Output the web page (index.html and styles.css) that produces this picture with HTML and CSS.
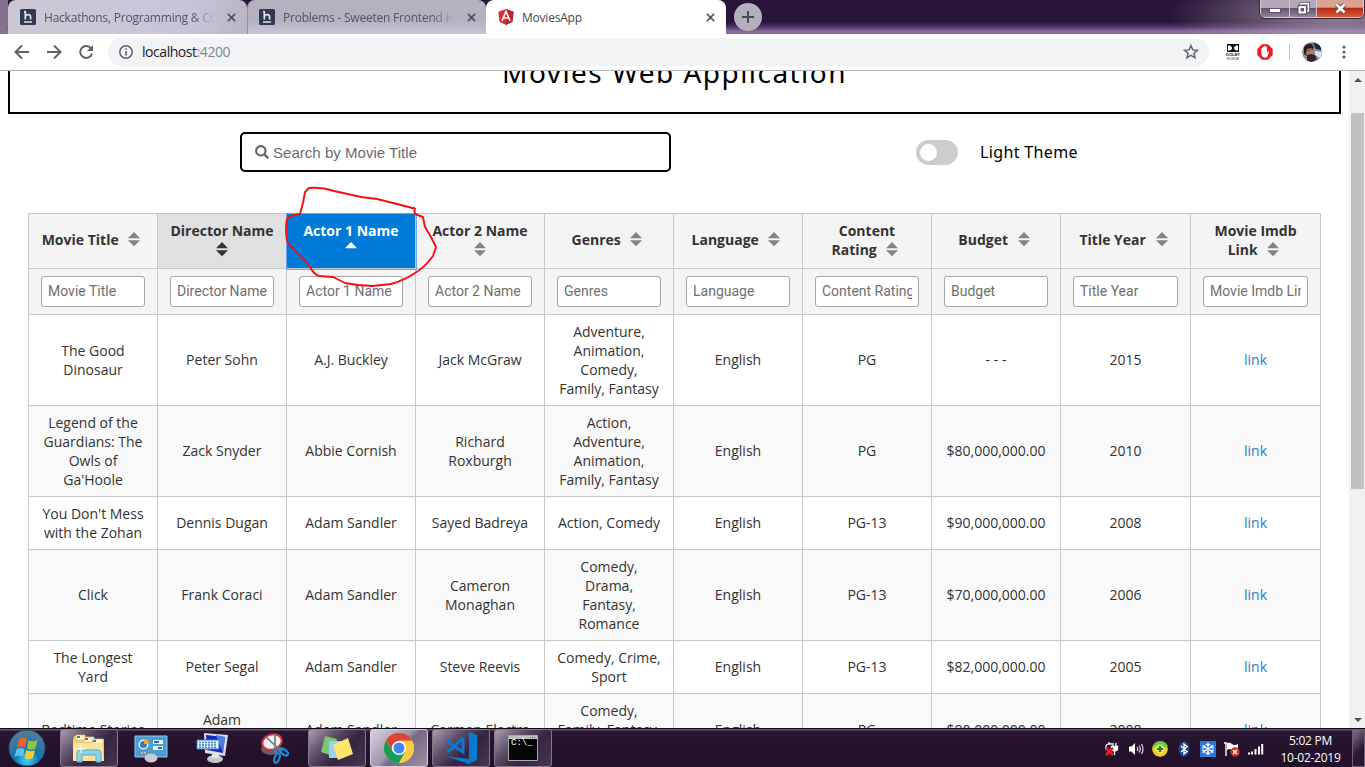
FILE: index.html
```html
<!DOCTYPE html>
<html lang="en">
<head>
<meta charset="utf-8">
<title>MoviesApp</title>
<link rel="stylesheet" href="styles.css">
</head>
<body>
<svg class="defs" aria-hidden="true">
  <symbol id="sort" viewBox="0 0 18 16"><path d="M3 7.2 9 1l6 6.200zM3 9.300h12L9 15.200z"/></symbol>
  <symbol id="x" viewBox="0 0 10 10"><path d="M1 1l8 8M9 1l-8 8" fill="none" stroke="currentColor" stroke-width="1.7"/></symbol>
  <symbol id="he" viewBox="0 0 16 16"><rect width="16" height="16" rx="1.500" fill="#323754"/><path d="M5.300 2v8.500M5.300 7.500q1-2 3.200-1.800Q10.600 6 10.600 8v2.500M4 2.700h1.300M4 13h8" fill="none" stroke="#e3e3ee" stroke-width="1.700"/></symbol>
</svg>

<header class="tabs">
  <div class="tab first"><svg class="fav"><use href="#he"/></svg><span class="tab-title fade">Hackathons, Programming &amp; Coding</span><svg class="close"><use href="#x"/></svg></div>
  <div class="tab second"><svg class="fav"><use href="#he"/></svg><span class="tab-title fade">Problems - Sweeten Frontend Hiring</span><svg class="close"><use href="#x"/></svg></div>
  <div class="tab active"><svg class="fav" viewBox="0 0 16 16"><path d="M8 0l7.600 2.700-1.100 10L8 16l-6.500-3.300L.400 2.700z" fill="#dd2c36"/><path d="M8 0l7.600 2.700-1.100 10L8 16z" fill="#b9262e"/><path d="M4 11.800 8 2.600l4 9.200M5.700 9h4.600" fill="none" stroke="#fff" stroke-width="1.600"/></svg><span class="tab-title">MoviesApp</span><svg class="close"><use href="#x"/></svg></div>
  <div class="newtab"><svg width="14" height="14" viewBox="0 0 14 14"><path d="M7 1v12M1 7h12" stroke="#4b4a55" stroke-width="2"/></svg></div>
  <div class="winbtns">
    <span class="wb min"><svg width="12" height="5"><rect x=".5" y=".5" width="11" height="4" fill="#fff" stroke="#555566"/></svg></span>
    <span class="wb max"><svg width="13" height="13"><path d="M4 3V1h8v8h-2" fill="none" stroke="#515164" stroke-width="2.600"/><path d="M4 3V1.500h7.500V9H10" fill="none" stroke="#fff" stroke-width="1.300"/><path d="M1 3.500h8.500v8.500H1z" fill="#fff" stroke="#515164"/><path d="M4 6.500h2.500V9H4z" fill="#77768a" stroke="#515164"/></svg></span>
    <span class="wb cls"><svg width="13" height="11"><path d="M2.500 1.500l8 8M10.500 1.500l-8 8" stroke="#5e4249" stroke-width="4.600"/><path d="M2.500 1.500l8 8M10.500 1.500l-8 8" stroke="#fff" stroke-width="2.700"/></svg></span>
  </div>
</header>

<nav class="toolbar">
  <svg class="nav" viewBox="0 0 16 16"><path d="M15 8H2M8 1.500 1.500 8 8 14.500"/></svg>
  <svg class="nav" viewBox="0 0 16 16"><path d="M1 8h13M8 1.500 14.500 8 8 14.500"/></svg>
  <svg class="nav" viewBox="0 0 16 16"><path d="M13 4.300A6 6 0 1 0 14 9.500"/><path d="M15 1v6H9z" class="solid"/></svg>
  <div class="omnibox">
    <svg width="16" height="16" viewBox="0 0 16 16"><circle cx="8" cy="8" r="6.200" fill="none" stroke="#5f6368" stroke-width="1.500"/><path d="M8 7v4.500M8 4.200v1.600" stroke="#5f6368" stroke-width="1.600"/></svg>
    <span class="url">localhost<span>:4200</span></span>
    <svg class="star" width="16" height="16" viewBox="0 0 16 16"><path d="M8 1.700l1.800 4.200 4.600.4-3.500 3 1.100 4.500L8 11.400l-4 2.400 1.100-4.500-3.500-3 4.600-.4z" fill="none" stroke="#5f6368" stroke-width="1.500"/></svg>
  </div>
  <div class="dolby"><svg width="12" height="8"><path d="M0 0h12v8H0z" fill="#111"/><path d="M1 1.500h1.500Q5 2 5 4T2.500 6.500H1zM11 1.500H9.500Q7 2 7 4t2.500 2.500H11z" fill="#fff"/></svg><b>DOLBY</b><i>VOICE</i></div>
  <svg class="adblock" width="16" height="16" viewBox="0 0 16 16"><path d="M5 .3h6L15.700 5v6L11 15.700H5L.300 11V5z" fill="#ec1c24"/><path d="M4.300 8V4.300q.8-.8 1.300 0V7V3q.8-.8 1.400 0v3.500V2.300q.8-.7 1.400 0v4.200V3q.9-.8 1.500 0v6l1.200-1.800q1.300-.3.900.8L10.300 13Q7.500 14.500 5.300 12.500 4.300 11 4.300 8z" fill="#fff"/></svg>
  <span class="sep"></span>
  <svg class="avatar" width="20" height="20" viewBox="0 0 20 20"><defs><clipPath id="ac"><circle cx="10" cy="10" r="10"/></clipPath></defs><g clip-path="url(#ac)"><path d="M0 0h20v20H0z" fill="#8d9099"/><path d="M2 5q3-4 8-3l2 4-3 3-4 5-3-2z" fill="#2c1e20"/><path d="M5 7l5-1 3 4-2 5-4 1-3-4z" fill="#b67c68"/><path d="M6 8l2 1M9 7l2 1" stroke="#3d2623"/><path d="M11 1l8 1v6l-5-1z" fill="#1c2741"/><path d="M13 9l7 1-2 6-5-3z" fill="#d8e7f2"/><path d="M5 13l4-1 4 1 2 4-5 3H5z" fill="#342328"/></g></svg>
  <svg class="dots" width="4" height="14"><circle cx="2" cy="2" r="1.600"/><circle cx="2" cy="7" r="1.600"/><circle cx="2" cy="12" r="1.600"/></svg>
</nav>

<main class="viewport">
  <div class="page">
    <h1 class="hero">Movies Web Application</h1>
    <div class="controls">
      <div class="search"><svg width="14" height="14" viewBox="0 0 14 14"><circle cx="5.800" cy="5.800" r="4.700" fill="none" stroke="#636363" stroke-width="2.100"/><path d="M9.200 9.200l4 4" stroke="#636363" stroke-width="2.500"/></svg><span>Search by Movie Title</span></div>
      <div class="toggle"><i></i></div><span class="theme">Light Theme</span>
    </div>
    <table class="movies">
      <colgroup><col span="8"><col class="wide" span="2"></colgroup>
      <thead>
        <tr class="head">
          <th>Movie Title <svg><use href="#sort"/></svg></th>
          <th class="stacked hover">Director Name<br><svg><use href="#sort"/></svg></th>
          <th class="stacked sorted">Actor 1 Name<br><svg viewBox="0 0 18 16"><path d="M3 7.200 9 1l6 6.200z"/></svg></th>
          <th class="stacked">Actor 2 Name<br><svg><use href="#sort"/></svg></th>
          <th>Genres <svg><use href="#sort"/></svg></th>
          <th>Language <svg><use href="#sort"/></svg></th>
          <th>Content<br>Rating <svg><use href="#sort"/></svg></th>
          <th>Budget <svg><use href="#sort"/></svg></th>
          <th>Title Year <svg><use href="#sort"/></svg></th>
          <th>Movie Imdb<br>Link <svg><use href="#sort"/></svg></th>
        </tr>
        <tr class="filters">
          <th><input placeholder="Movie Title"></th><th><input placeholder="Director Name"></th><th><input placeholder="Actor 1 Name"></th><th><input placeholder="Actor 2 Name"></th><th><input placeholder="Genres"></th><th><input placeholder="Language"></th><th><input placeholder="Content Rating"></th><th><input placeholder="Budget"></th><th><input placeholder="Title Year"></th><th><input placeholder="Movie Imdb Link"></th>
        </tr>
      </thead>
      <tbody>
        <tr><td>The Good<br>Dinosaur</td><td>Peter Sohn</td><td>A.J. Buckley</td><td>Jack McGraw</td><td>Adventure,<br>Animation,<br>Comedy,<br>Family, Fantasy</td><td>English</td><td>PG</td><td>- - -</td><td>2015</td><td><a>link</a></td></tr>
        <tr><td>Legend of the<br>Guardians: The<br>Owls of<br>Ga'Hoole</td><td>Zack Snyder</td><td>Abbie Cornish</td><td>Richard<br>Roxburgh</td><td>Action,<br>Adventure,<br>Animation,<br>Family, Fantasy</td><td>English</td><td>PG</td><td>$80,000,000.00</td><td>2010</td><td><a>link</a></td></tr>
        <tr><td>You Don't Mess<br>with the Zohan</td><td>Dennis Dugan</td><td>Adam Sandler</td><td>Sayed Badreya</td><td>Action, Comedy</td><td>English</td><td>PG-13</td><td>$90,000,000.00</td><td>2008</td><td><a>link</a></td></tr>
        <tr><td>Click</td><td>Frank Coraci</td><td>Adam Sandler</td><td>Cameron<br>Monaghan</td><td>Comedy,<br>Drama,<br>Fantasy,<br>Romance</td><td>English</td><td>PG-13</td><td>$70,000,000.00</td><td>2006</td><td><a>link</a></td></tr>
        <tr><td>The Longest<br>Yard</td><td>Peter Segal</td><td>Adam Sandler</td><td>Steve Reevis</td><td>Comedy, Crime,<br>Sport</td><td>English</td><td>PG-13</td><td>$82,000,000.00</td><td>2005</td><td><a>link</a></td></tr>
        <tr><td>Bedtime Stories</td><td>Adam<br>Shankman</td><td>Adam Sandler</td><td>Carmen Electra</td><td>Comedy,<br>Family, Fantasy,<br>Romance</td><td>English</td><td>PG</td><td>$80,000,000.00</td><td>2008</td><td><a>link</a></td></tr>
      </tbody>
    </table>
  </div>
  <div class="scrollbar"><svg width="8" height="4"><path d="M0 4l4-4 4 4z"/></svg><div class="thumb"></div><svg class="down" width="8" height="4"><path d="M0 0h8L4 4z"/></svg></div>
</main>

<svg class="ink" width="160" height="110" viewBox="280 180 160 110"><path d="M300 214 303 203 305 192 309 188Q322 187 334 191 348 194 361 197L377 199 397 204 416 209M414 207 415 214 423 217 425 227 431 237 436 247 433 256Q425 267 415 273 405 280 391 284L373 286Q359 286 345 283L333 277 319 276Q313 274 309 265 303 258 295 251L287 241Q285 229 287 219 291 215 300 214"/></svg>

<footer class="taskbar">
  <span class="app"><svg width="38" height="38" viewBox="0 0 38 38"><defs><radialGradient id="orb" cx=".5" cy=".85" r=".85"><stop offset="0" stop-color="#36d9ff"/><stop offset=".4" stop-color="#1273ae"/><stop offset="1" stop-color="#5c7e96"/></radialGradient></defs><circle cx="19" cy="19" r="18" fill="url(#orb)" stroke="#284d6a"/><path d="M11 10q4-2.500 8 0L17 18.500q-3.500-2-8 0z" fill="#f0612a"/><path d="M20.500 11q4 2.500 9 0l-2 8.500q-4 2.500-8.600 0z" fill="#8cc63f"/><path d="M8.600 20q4-2 8 0L15 28q-3.500-2.500-8.500 0z" fill="#63bdf0"/><path d="M18.300 21q4 2.500 8.600 0L25 29q-4 2.500-8.500 0z" fill="#fcca35"/></svg></span>
  <span class="app open"><svg width="34" height="32" viewBox="0 0 34 32"><path d="M2 4h10l2 3h18v22H1V8z" fill="#e9ce78"/><path d="M4 3h9v5H4zM12 5h10v5H12zM20 7h11v5H20z" fill="#fff9df" stroke="#d8b968" stroke-width=".7"/><path d="M5 4h3v2H5z" fill="#24a544"/><path d="M13 6h3v2h-3z" fill="#d43b29"/><path d="M21 8h3v2h-3z" fill="#2687cf"/><path d="M1 11h29l2 18H1z" fill="#f8e59b"/><path d="M5 30V21q0-3 3-3h18q3 0 3 3v9h-5v-7H10v7z" fill="#8dd0ec" stroke="#57a7ce"/><path d="M9 13v8M5 17h8" stroke="#fff"/></svg></span>
  <span class="app"><svg width="34" height="30" viewBox="0 0 34 30"><path d="M1 3h32v21H1z" fill="#4b9dd2" stroke="#8ccaf0"/><circle cx="9.500" cy="11.500" r="4.300" fill="#3479bb" stroke="#e2f5ff" stroke-width="1.500"/><path d="M10 11V6q5 0 5 5z" fill="#f9a62b"/><path d="M19 9h10M19 15h10" stroke="#e3f5fc" stroke-width="4"/><path d="M20 9h5M24 15h4" stroke="#2472b1" stroke-width="2"/><path d="M7 20h2M10 20h2" stroke="#ffb13a" stroke-width="2"/><ellipse cx="17" cy="25" rx="6.500" ry="4.500" fill="#c9cbce"/></svg></span>
  <span class="app"><svg width="34" height="34" viewBox="0 0 34 34"><path d="M8 2 32 4 29 25 9 22z" fill="#d9dde4"/><path d="M10 4 29 6 27 22 11 19z" fill="#1029be"/><path d="M20 4l9 2-2 16z" fill="#507ce0"/><path d="M1 9h22v9H1z" fill="#e9f3fc" stroke="#317ccd"/><path d="M3 11.500h18M3 14h18M3 16.500h18" stroke="#317ccd" stroke-width="1.500" stroke-dasharray="2 1"/><ellipse cx="19" cy="28" rx="8" ry="4" fill="#c5c7ce"/><path d="M16 22h7v5h-7z" fill="#e3e4e8"/></svg></span>
  <span class="app"><svg width="34" height="34" viewBox="0 0 34 34"><ellipse cx="13" cy="18" rx="10" ry="6" fill="#6a5868"/><ellipse cx="14" cy="11" rx="10" ry="7.500" fill="#f2eff1" stroke="#d3343c" stroke-width="2" transform="rotate(-18 14 11)"/><path d="M8 6l15 14M17 3l0 19" stroke="#737983" stroke-width="1.700"/><path d="M17 18l1 4M19 18l6 1" stroke="#238ad1" stroke-width="2"/><ellipse cx="26" cy="21" rx="4.500" ry="2.500" fill="none" stroke="#238ad1" stroke-width="2.200" transform="rotate(38 26 21)"/><ellipse cx="19" cy="27" rx="2.300" ry="5" fill="none" stroke="#238ad1" stroke-width="2.200" transform="rotate(20 19 27)"/></svg></span>
  <span class="app open"><svg width="34" height="30" viewBox="0 0 34 30"><path d="M5 3l12 3-4 17L1 19z" fill="#79c877"/><path d="M9 8h15v17H9z" fill="#9fd0fa"/><path d="M13 12 28 5l5 16-15 6z" fill="#ffe56b"/></svg></span>
  <span class="app open current"><svg width="32" height="32" viewBox="0 0 32 32"><circle cx="16" cy="16" r="15" fill="#f4c345"/><path d="M16 16 3 8.500A15 15 0 0 1 29 8.500H16z" fill="#db4437"/><path d="M16 16l-6 4L3 8.500A15 15 0 0 0 16 31l6.500-11.500z" fill="#169d58"/><path d="M29 8.500H16l6.500 11L16 31A15 15 0 0 0 29 8.500z" fill="#ffcd40"/><path d="M3 8.500A15 15 0 0 1 29 8.500H16a7 7 0 0 0-6.600 10z" fill="#db4437"/><circle cx="16" cy="16" r="7" fill="#fff"/><circle cx="16" cy="16" r="5.500" fill="#4285f4"/></svg></span>
  <span class="app open"><svg width="34" height="34" viewBox="0 0 34 34"><path d="M25 1l8 3v25l-8 4L1 25l24 3z" fill="#087bd0"/><path d="M19 7v14L4 11l2-1.500M19 7 5 20l-1.500-1" fill="none" stroke="#087bd0" stroke-width="3"/></svg></span>
  <span class="app open"><svg width="30" height="26" viewBox="0 0 30 26"><path d="M.5.500h29v25H.500z" fill="#050505" stroke="#aaa"/><path d="M1 1h28v3H1z" fill="#bfc1c6"/><path d="M22 2.500h6" stroke="#666" stroke-dasharray="1 1"/></svg><span class="prompt">C:\_</span></span>
  <div class="tray">
    <svg viewBox="0 0 16 16"><path d="M8 3q-6-1-6 3v3M5 1v3" fill="none" stroke="#fff" stroke-width="1.300"/><path d="M7.500 5.500h6v3q-3 3-6 0zM9 2v3M12 2v3M10.500 10v4" fill="#fff" stroke="#fff" stroke-width="1.300"/><path d="M2 7l7 7M9 7l-7 7" stroke="#f11922" stroke-width="2.500"/></svg>
    <svg viewBox="0 0 16 16"><path d="M1 5.500h2.500L7 2v12l-3.500-3.500H1z" fill="#fff"/><path d="M9 6q1.500 2 0 4M11 4.500q2.500 3.500 0 7M13.500 3q3 5 0 10" fill="none" stroke="#ddd" stroke-width="1.200"/></svg>
    <svg viewBox="0 0 16 16"><circle cx="8" cy="8" r="7.800" fill="#f1cc26"/><path d="M8 .2A7.800 7.800 0 0 0 .2 8q3-4 7.800-2t7.800-1A7.800 7.800 0 0 0 8 .2z" fill="#70c63d"/><circle cx="8" cy="8" r="4.500" fill="#f7e650"/><path d="M8 5v6M5 8h6" stroke="#16813e" stroke-width="2.200"/></svg>
    <svg viewBox="0 0 16 16"><ellipse cx="8" cy="8" rx="5.500" ry="7.800" fill="#124a8b"/><path d="M5 5l6 5.500L8 13V3l3 2.500L5 11" fill="none" stroke="#fff" stroke-width="1.400"/></svg>
    <svg viewBox="0 0 16 16"><path d="M0 0h16v16H0z" fill="#2678dd"/><path d="M8 1.500v13M2.500 4.500l11 7M13.500 4.500l-11 7M6 3l2 2 2-2M6 13l2-2 2 2M2 7l3-.5L4.500 4M14 7l-3-.5.500-2.500M2 9l3 .500-.500 2.500M14 9l-3 .500.500 2.500" fill="none" stroke="#fff" stroke-width="1.200"/></svg>
    <svg viewBox="0 0 16 16"><path d="M2 1v14M0 2h2" stroke="#fff" stroke-width="1.400"/><path d="M3 2q3-1 5 1t6 0v7q-4 1-6-1T3 9z" fill="#fff"/><circle cx="11" cy="11" r="4.700" fill="#d92a2b"/><path d="M9 9l4 4M13 9l-4 4" stroke="#fff" stroke-width="1.500"/></svg>
    <svg viewBox="0 0 16 16"><path d="M1 13.500v-2M4 13.500v-3M7.500 13.500V8M11 13.500V5.500M14.200 13.500V3" stroke="#fff" stroke-width="2"/></svg>
  </div>
  <div class="clock">5:02 PM<br>10-02-2019</div>
  <div class="peek"></div>
</footer>
</body>
</html>
```

FILE: styles.css
```css
* { box-sizing: border-box; }
body { margin: 0; width: 1365px; height: 767px; overflow: hidden; display: flex; flex-direction: column; background: #fff; font-family: "Open Sans", sans-serif; position: relative; }
svg { display: block; flex: none; }
.defs { position: absolute; width: 0; height: 0; }

/* browser tabs */
.tabs { height: 34px; flex: none; display: flex; padding-left: 8px; background: radial-gradient(ellipse 170px 45px at 1340px 14px, rgba(190,175,190,.75), transparent), linear-gradient(#281539 0 64%, #4b3260 78%, #8a6aa0 92%, #8a6aa0); }
.tab { height: 34px; display: flex; align-items: center; padding: 0 11px 0 12px; border-radius: 8px 8px 0 0; font-size: 12px; color: #55545f; background: linear-gradient(#b5b2c0 60%, #c9c4d9); }
.first { width: 239px; background: linear-gradient(100deg, #cbc7d2, #cbc7d8 35%, #c9c3da 75%, #b9b5c2); position: relative; }
.first::before { content: ""; position: absolute; left: -8px; top: 0; width: 8px; height: 34px; background: #83718f; border-radius: 0 0 8px 0; }
.second { width: 239px; border-left: 1px solid #9995a4; padding: 0 10px 0 11px; }
.active { width: 240px; background: #fff; color: #45474b; }
.fav { width: 16px; height: 16px; }
.tab-title { flex: 1; min-width: 0; margin: 0 7px 0 8px; overflow: hidden; white-space: nowrap; letter-spacing: -.22px; }
.fade { -webkit-mask-image: linear-gradient(90deg, #000 84%, transparent 97%); mask-image: linear-gradient(90deg, #000 84%, transparent 97%); }
.close { width: 9px; height: 9px; color: #4e4d57; }
.newtab { width: 28px; height: 28px; margin: 3px 0 0 8px; border-radius: 50%; background: #b3afbd; display: grid; place-items: center; }
.winbtns { display: flex; height: 19px; margin: -1px 1px 0 auto; width: 104px; border: 1px solid #d5ccd9; outline: 1px solid #37283f; border-top: 0; border-radius: 0 0 5px 5px; overflow: hidden; }
.wb { display: grid; place-items: center; background: linear-gradient(#b3a7b8 50%, #675570 52%, #9284a0); border-right: 1px solid #d1c6d6; }
.min { width: 29px; padding-top: 4px; }
.max { width: 27px; }
.cls { flex: 1; border: 0; background: linear-gradient(#d9a494 45%, #b82b17 52%, #d75c3a); }

/* browser toolbar */
.toolbar { height: 37px; flex: none; display: flex; align-items: center; padding: 0 19px 0 14px; background: #fff; border-bottom: 1px solid #b3b3b5; }
.nav { width: 16px; height: 16px; margin-right: 16px; fill: none; stroke: #5f6368; stroke-width: 2; }
.nav .solid { fill: #5f6368; stroke: none; }
.omnibox { width: 1101px; height: 28px; margin-left: -2px; border-radius: 14px; background: #f1f3f4; display: flex; align-items: center; padding: 0 10px; }
.url { margin: -2px 0 0 8px; font-size: 14px; letter-spacing: -.45px; color: #202124; }
.url span { color: #80868b; }
.star { margin-left: auto; }
.dolby { width: 12px; margin: 1px 0 0 18px; display: flex; flex-direction: column; align-items: center; font: 4px/4px "Liberation Sans", sans-serif; color: #222; }
.dolby b { margin-top: 1px; }
.dolby i { font-style: normal; }
.adblock { margin-left: 18px; }
.sep { width: 1px; height: 16px; margin-left: 16px; background: #c6c6ca; }
.avatar { margin-left: 12px; }
.dots { margin-left: 20px; fill: #5f6368; }

/* page */
.viewport { height: 657px; flex: none; overflow: hidden; display: flex; }
.page { width: 1349px; flex: none; }
.hero { height: 84px; margin: -41px 8px 0; padding-top: 21px; border: 2px solid #000; text-align: center; font: 400 28px/38px "Noto Sans", sans-serif; letter-spacing: 1.45px; color: #000; }
.controls { height: 99px; padding: 18px 0 0 240px; display: flex; align-items: flex-start; }
.search { width: 431px; height: 40px; border: 2px solid #000; border-radius: 5px; display: flex; align-items: center; gap: 4px; padding-left: 13px; font: 15px "Liberation Sans", sans-serif; color: #6b6b6b; letter-spacing: .03px; }
.toggle { width: 42px; height: 25px; margin: 8px 0 0 245px; border-radius: 13px; background: #ccc; padding: 4px; }
.toggle i { display: block; width: 17px; height: 17px; border-radius: 50%; background: #fff; }
.theme { margin: 9px 0 0 22px; font: 16px/22px "Noto Sans", sans-serif; letter-spacing: .35px; color: #000; }
.movies { width: 1293px; margin-left: 28px; table-layout: fixed; border-collapse: collapse; font-size: 14px; line-height: 19px; text-align: center; color: #333; white-space: nowrap; }
.movies col { width: 129px; }
.movies .wide { width: 130px; }
.movies th, .movies td { border: 1px solid #c8c8c8; padding: 6.6px 0 7.4px; }
.movies .head th { height: 55px; background: #f4f4f4; font-weight: 700; padding: 6px 0 9px; }
.head svg { display: inline-block; width: 18px; height: 16px; vertical-align: -2px; margin: 0 1px 0 3px; fill: #848484; }
.head .stacked svg { margin: 0; }
.movies .head .hover { background: #e0e0e0; }
.head .hover svg { fill: #333; }
.movies .head .sorted { background: #007ad9; color: #fff; outline: 1px solid #6da5f5; }
.head .sorted svg { fill: #fff; }
.movies .filters th { height: 46px; background: #f4f4f4; padding: 7px 0; }
.filters input { display: block; width: 104px; height: 31px; margin: 0 auto; border: 1px solid #a6a6a6; border-radius: 3px; padding: 0 6px 2px; font: 14px Roboto, sans-serif; background: #fff; }
.filters th:nth-child(n+9) input { width: 105px; }
.filters input::placeholder { color: #6f6f6f; opacity: 1; }
.movies tbody tr:nth-child(even) { background: #f9f9f9; }
.movies a { color: #1b7fcc; }
.scrollbar { width: 16px; background: #f1f1f1; display: flex; flex-direction: column; align-items: center; padding: 7px 0 6px 1px; }
.scrollbar svg { fill: #505050; }
.thumb { width: 13px; height: 376px; margin-top: 31px; background: #c1c1c1; }
.down { margin-top: auto; }
.ink { position: absolute; left: 280px; top: 180px; fill: none; stroke: #f80d12; stroke-width: 1.9; stroke-linejoin: round; }

/* taskbar */
.taskbar { height: 39px; flex: none; display: flex; align-items: center; background: linear-gradient(#100817 0 1px, #66576d 1px 2px, #291632 3px, #211029); }
.app { width: 58px; height: 38px; margin-right: 4px; flex: none; display: grid; place-items: center; border-radius: 3px; margin-top: 1px; position: relative; }
.app:first-child { width: 54px; margin-right: 6px; }
.open { border: 1px solid #85778c; background: linear-gradient(135deg, #a79faf, #5b4b64 35%, #362542 60%, #463650); }
.current { border-color: #d5cfda; background: linear-gradient(135deg, #d6d1db, #a097aa 45%, #766982 55%, #9c92a5); }
.prompt { position: absolute; left: 16px; top: 8px; font: 9px "Liberation Mono", monospace; color: #fff; }
.tray { margin-left: auto; display: flex; gap: 8px; padding-top: 2px; }
.tray svg { width: 16px; height: 16px; }
.clock { width: 88px; text-align: center; color: #fff; font-size: 12px; line-height: 17px; padding: 2px 0 0 5px; letter-spacing: -.25px; }
.peek { width: 13px; height: 38px; margin-top: 1px; border: 1px solid #6c6072; background: linear-gradient(135deg, #81758a, #2a1733 60%); }
```
